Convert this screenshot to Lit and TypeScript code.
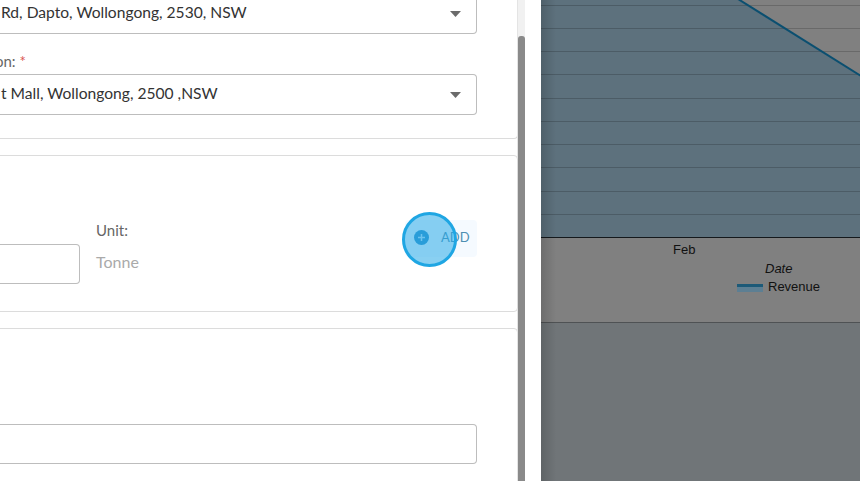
import {LitElement, css, html, svg} from 'lit';
import {customElement} from 'lit/decorators.js';

const gridLines = [5, 28, 51, 74, 98, 121, 144, 167, 191, 214];

@customElement('app-root')
export class AppRoot extends LitElement {
  private caret() {
    return html`<svg class="caret" width="11" height="6" viewBox="0 0 11 6"><polygon points="0,0 11,0 5.5,6" fill="#6b6b6b"></polygon></svg>`;
  }

  private chart() {
    return html`
      <svg class="chart" width="319" height="238" viewBox="541 0 319 238">
        <rect x="541" y="0" width="319" height="238" fill="#808080"></rect>
        <polygon points="541,0 738,0 860,75 860,237 541,237" fill="#5d717d"></polygon>
        ${gridLines.map((y) => svg`<line x1="541" x2="860" y1=${y + 0.5} y2=${y + 0.5} stroke="#000" stroke-opacity="0.18"></line>`)}
        <line x1="738" y1="-1" x2="861" y2="76" stroke="#0b4f70" stroke-width="2"></line>
        <line x1="541" x2="860" y1="237.5" y2="237.5" stroke="#15191c"></line>
      </svg>
    `;
  }

  render() {
    return html`
      <div class="page">
        <section class="panel">
          <div class="form">
            <div class="card first">
              <div class="select"><span class="crop">Rd, Dapto, Wollongong, 2530, NSW</span>${this.caret()}</div>
              <div class="label">on: <span class="req">*</span></div>
              <div class="select"><span class="crop">t Mall, Wollongong, 2500 ,NSW</span>${this.caret()}</div>
            </div>
            <div class="card second">
              <div class="qty"></div>
              <div class="unit">
                <div class="unit-label">Unit:</div>
                <div class="unit-value">Tonne</div>
              </div>
              <div class="add">
                <svg width="15" height="15" viewBox="0 0 15 15">
                  <circle cx="7.5" cy="7.5" r="7.5" fill="#2b8ec8"></circle>
                  <path d="M7.5 4v7M4 7.5h7" stroke="#bfe3f7" stroke-width="1.5"></path>
                </svg>
                <span>ADD</span>
              </div>
            </div>
            <div class="card third">
              <div class="field"></div>
            </div>
          </div>
          <div class="scrollbar"><div class="thumb"></div></div>
          <div class="click"></div>
        </section>
        <section class="report">
          ${this.chart()}
          <div class="axis">
            <div class="month">Feb</div>
            <div class="title">Date</div>
            <div class="legend"><span class="swatch"></span>Revenue</div>
          </div>
          <div class="below"></div>
          <div class="edge"></div>
        </section>
      </div>
    `;
  }

  static styles = css`
    :host {
      display: block;
      width: 860px;
      height: 481px;
      overflow: hidden;
      font-family: 'Lato', sans-serif;
    }

    .page {
      display: flex;
      height: 481px;
    }

    .panel {
      position: relative;
      display: flex;
      width: 541px;
      flex: none;
      height: 481px;
      background: #fff;
      overflow: hidden;
    }

    .form {
      width: 518px;
      flex: none;
      display: flex;
      flex-direction: column;
      gap: 16px;
      margin-top: -7px;
    }

    .card {
      flex: none;
      box-sizing: border-box;
      margin-left: -20px;
      border: 1px solid #dcdcdc;
      border-radius: 4px;
      background: #fff;
    }

    .first {
      height: 146px;
      border-top: none;
      padding: 0 40px 0 0;
    }

    .select {
      box-sizing: border-box;
      height: 41px;
      border: 1px solid #bdbdbd;
      border-left: none;
      border-radius: 4px;
      display: flex;
      align-items: center;
      justify-content: space-between;
      padding: 0 15px 0 20px;
      font-size: 15.6px;
      color: #333;
    }

    .crop {
      margin-top: -4px;
    }

    .label {
      height: 40px;
      box-sizing: border-box;
      padding: 18px 0 0 14px;
      font-size: 15px;
      line-height: 18px;
      color: #666;
    }

    .req {
      color: #d9534f;
    }

    .second {
      height: 157px;
      position: relative;
      display: flex;
      padding: 64px 40px 0 0;
    }

    .qty {
      box-sizing: border-box;
      width: 99px;
      height: 40px;
      margin-top: 24px;
      border: 1px solid #bdbdbd;
      border-left: none;
      border-radius: 4px;
    }

    .unit {
      margin-left: 16px;
      font-size: 15px;
    }

    .unit-label {
      color: #666;
      line-height: 20px;
    }

    .unit-value {
      color: #aaa;
      font-size: 16px;
      line-height: 20px;
      margin-top: 12px;
    }

    .add {
      margin-left: auto;
      box-sizing: border-box;
      width: 72px;
      height: 37px;
      border-radius: 4px;
      background: #f5faff;
      display: flex;
      align-items: center;
      gap: 12px;
      padding: 0 0 3px 9px;
      font-size: 13px;
      color: #4d8fb2;
    }

    .third {
      height: 200px;
      padding: 95px 40px 0 0;
    }

    .field {
      box-sizing: border-box;
      height: 40px;
      border: 1px solid #bdbdbd;
      border-left: none;
      border-radius: 4px;
    }

    .scrollbar {
      width: 7px;
      flex: none;
      padding-top: 36px;
      background: #f1f1f1;
      display: flex;
      border-left: 1px solid #e4e4e4;
      margin-left: -1px;
    }

    .thumb {
      flex: 1;
      background: #8a8a8a;
      border-radius: 3px 3px 0 0;
    }

    .click {
      position: absolute;
      left: 402px;
      top: 212px;
      box-sizing: border-box;
      width: 55px;
      height: 55px;
      border-radius: 50%;
      border: 3px solid #1fa6e3;
      background: rgba(40, 170, 232, 0.55);
    }

    .report {
      position: relative;
      flex: 1;
      display: flex;
      flex-direction: column;
      background: #808080;
      font-family: 'Liberation Sans', sans-serif;
      font-size: 13px;
      color: #111;
    }

    .chart {
      display: block;
      flex: none;
    }

    .axis {
      box-sizing: border-box;
      height: 85px;
      flex: none;
      background: #808080;
      border-bottom: 1px solid #4f5254;
      padding-top: 5px;
    }

    .month {
      margin-left: 132px;
      line-height: 14px;
    }

    .title {
      margin: 5px 0 0 224px;
      line-height: 14px;
      font-style: italic;
    }

    .legend {
      margin: 4px 0 0 196px;
      display: flex;
      align-items: center;
      gap: 5px;
      line-height: 14px;
    }

    .swatch {
      box-sizing: border-box;
      width: 26px;
      height: 8px;
      margin-top: 2px;
      background: #5d7f93;
      border-top: 3px solid #1d5a78;
    }

    .below {
      flex: 1;
      background: #707578;
    }

    .edge {
      position: absolute;
      left: 0;
      top: 0;
      bottom: 0;
      width: 15px;
      background: linear-gradient(90deg, rgba(0, 0, 0, 0.15), rgba(0, 0, 0, 0));
    }
  `;
}
